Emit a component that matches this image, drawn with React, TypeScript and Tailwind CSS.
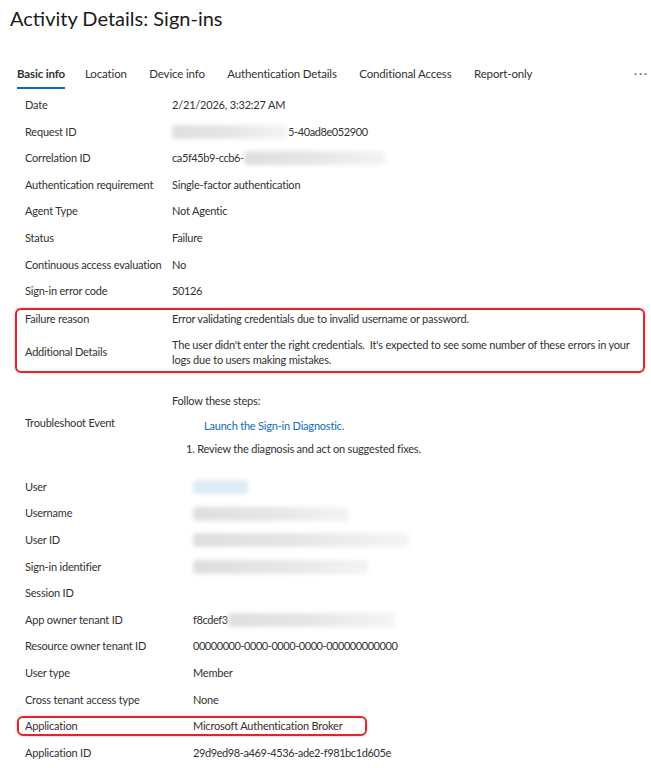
import React from "react"

const font = { fontFamily: 'Lato, "Noto Sans", sans-serif' }

function Blur({ w, tone = "gray" }: { w: string; tone?: "gray" | "blue" }) {
  return (
    <span
      className={
        "inline-block h-[14px] rounded-sm blur-[2px] " +
        w +
        (tone === "blue"
          ? " bg-[#dcebf5]"
          : " bg-gradient-to-r from-[#dedede] via-[#e6e6e6] to-[#f4f4f4]")
      }
    />
  )
}

type Row = { label: string; value: React.ReactNode }

function InfoRow({ label, value, labelW }: Row & { labelW: string }) {
  return (
    <div className="flex h-[26.6px] items-center">
      <div className={"shrink-0 whitespace-nowrap " + labelW}>{label}</div>
      <div className="flex items-center whitespace-nowrap">{value}</div>
    </div>
  )
}

export default function App() {
  const top: Row[] = [
    { label: "Date", value: "2/21/2026, 3:32:27 AM" },
    {
      label: "Request ID",
      value: (
        <>
          <Blur w="w-[116px]" />
          <span className="tracking-[-0.4px]">5-40ad8e052900</span>
        </>
      ),
    },
    {
      label: "Correlation ID",
      value: (
        <>
          <span className="tracking-[-0.4px]">ca5f45b9-ccb6-</span>
          <Blur w="w-[141px]" />
        </>
      ),
    },
    { label: "Authentication requirement", value: "Single-factor authentication" },
    { label: "Agent Type", value: "Not Agentic" },
    { label: "Status", value: "Failure" },
    { label: "Continuous access evaluation", value: "No" },
    { label: "Sign-in error code", value: <span className="tracking-[-0.4px]">50126</span> },
  ]

  const bottom: Row[] = [
    { label: "User", value: <Blur w="w-[55px]" tone="blue" /> },
    { label: "Username", value: <Blur w="w-[156px]" /> },
    { label: "User ID", value: <Blur w="w-[216px]" /> },
    { label: "Sign-in identifier", value: <Blur w="w-[176px]" /> },
    { label: "Session ID", value: "" },
    {
      label: "App owner tenant ID",
      value: (
        <>
          <span className="tracking-[-0.4px]">f8cdef3</span>
          <Blur w="w-[166px]" />
        </>
      ),
    },
    {
      label: "Resource owner tenant ID",
      value: <span className="tracking-[-0.45px]">00000000-0000-0000-0000-000000000000</span>,
    },
    { label: "User type", value: "Member" },
    { label: "Cross tenant access type", value: "None" },
  ]

  const tabs = ["Location", "Device info", "Authentication Details", "Conditional Access", "Report-only"]

  return (
    <div
      className="min-h-[768px] w-[651px] bg-white text-[11px] tracking-[-0.2px] text-[#323130]"
      style={font}
    >
      <h1 className="pl-[10px] pt-[4px] text-[20px] leading-[28px] font-normal tracking-normal text-[#1b1a19]">
        Activity Details: Sign-ins
      </h1>

      {/* tabs */}
      <div className="mt-[34px] flex items-start pl-[17px] text-[11.5px] tracking-[-0.15px]">
        <div className="mr-[20px] flex flex-col">
          <span className="leading-[16px] font-bold">Basic info</span>
          <span className="mt-[5px] h-[2px] bg-[#0f6cbd]" />
        </div>
        <div className="flex gap-[22.5px]">
          {tabs.map((t) => (
            <span key={t} className="leading-[16px]">
              {t}
            </span>
          ))}
        </div>
        <span className="ml-auto pr-[2px] leading-[16px] tracking-[2px] text-[#605e5c]">···</span>
      </div>

      <div className="mt-[3px] pl-[25px] pr-[6px]">
        {top.map((r) => (
          <InfoRow key={r.label} {...r} labelW="w-[147px]" />
        ))}

        {/* highlighted failure block */}
        <div className="-ml-[10px] mt-[3px] rounded-[6px] border-2 border-[#e3242b] pb-[4px] pl-[8px] shadow-[0_0_3px_rgba(0,0,0,0.25)]">
          <div className="flex h-[18px] items-center">
            <div className="w-[147px] shrink-0">Failure reason</div>
            <div>Error validating credentials due to invalid username or password.</div>
          </div>
          <div className="mt-[9px] flex items-center">
            <div className="w-[147px] shrink-0">Additional Details</div>
            <div className="leading-[15px] whitespace-nowrap">
              The user didn't enter the right credentials.&nbsp; It's expected to see some number of these errors in
              your
              <br />
              logs due to users making mistakes.
            </div>
          </div>
        </div>

        {/* troubleshoot */}
        <div className="mt-[20px] flex items-center">
          <div className="w-[147px] shrink-0 pb-[4px]">Troubleshoot Event</div>
          <div className="flex flex-col leading-[16px]">
            <span>Follow these steps:</span>
            <span className="mt-[9px] pl-[32px] text-[#0f6cbd]">Launch the Sign-in Diagnostic.</span>
            <span className="mt-[7px] pl-[14px]">1. Review the diagnosis and act on suggested fixes.</span>
          </div>
        </div>

        <div className="mt-[17px]">
          {bottom.map((r) => (
            <InfoRow key={r.label} {...r} labelW="w-[168px]" />
          ))}
          <div className="relative flex h-[26.6px] items-center">
            <span className="absolute -left-[8px] top-[3px] h-[20px] w-[350px] rounded-[6px] border-2 border-[#e3242b] shadow-[0_0_3px_rgba(0,0,0,0.25)]" />
            <div className="w-[168px] shrink-0">Application</div>
            <div>Microsoft Authentication Broker</div>
          </div>
          <InfoRow
            label="Application ID"
            value={<span className="tracking-[-0.4px]">29d9ed98-a469-4536-ade2-f981bc1d605e</span>}
            labelW="w-[168px]"
          />
        </div>
      </div>
    </div>
  )
}
